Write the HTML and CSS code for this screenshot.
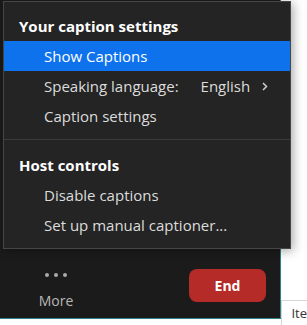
FILE: index.html
```html
<!DOCTYPE html>
<html>
<head>
<meta charset="utf-8">
<link rel="stylesheet" href="styles.css">
</head>
<body>
<div class="page">
  <div class="window">
    <div class="stage"></div>
    <div class="toolbar">
      <div class="more">
        <div class="dots"><span></span><span></span><span></span></div>
        <div class="more-label">More</div>
      </div>
      <button class="end">End</button>
    </div>
  </div>
  <div class="side">
    <div class="side-head">Ite</div>
  </div>
</div>
<div class="menu">
  <div class="section">
    <div class="heading">Your caption settings</div>
    <div class="item active">Show Captions</div>
    <div class="item sub"><span>Speaking language:</span><span class="value">English<svg class="chev" width="6" height="9" viewBox="0 0 6 9"><path d="M1 1 L4.5 4.5 L1 8" fill="none" stroke="#cfcfcf" stroke-width="1.5"/></svg></span></div>
    <div class="item">Caption settings</div>
  </div>
  <div class="section second">
    <div class="heading h2">Host controls</div>
    <div class="item">Disable captions</div>
    <div class="item">Set up manual captioner...</div>
  </div>
</div>
</body>
</html>
```
FILE: styles.css
```css
html, body {
  margin: 0;
  padding: 0;
  background: #ffffff;
  font-family: "Open Sans", "Noto Sans", sans-serif;
}
.page {
  display: flex;
  width: 307px;
  height: 325px;
}
.window {
  width: 282px;
  height: 318px;
  background: #1b1b1b;
  border-right: 1px solid #2f7f8c;
  border-bottom: 1px solid #2f7f8c;
  display: flex;
  flex-direction: column;
}
.stage {
  height: 248px;
}
.toolbar {
  flex: 1;
  display: flex;
  align-items: flex-start;
}
.more {
  width: 112px;
  display: flex;
  flex-direction: column;
  align-items: center;
  padding-top: 24px;
}
.dots {
  display: flex;
  gap: 5px;
  height: 6px;
  align-items: center;
}
.dots span {
  width: 4px;
  height: 4px;
  border-radius: 50%;
  background: #a9a9a9;
}
.more-label {
  margin-top: 14px;
  font-size: 14px;
  line-height: 18px;
  color: #b8b8b8;
}
.end {
  margin-left: 77px;
  margin-top: 21px;
  width: 77px;
  height: 33px;
  border: none;
  border-radius: 8px;
  background: #b52b28;
  color: #ffffff;
  font-family: "Open Sans", "Noto Sans", sans-serif;
  font-weight: 700;
  font-size: 14px;
  padding: 0;
}
.side {
  flex: 1;
  padding-top: 300px;
}
.side-head {
  border-top: 1px solid #d6d6d6;
  border-left: 1px solid #d6d6d6;
  height: 24px;
  padding-left: 9px;
  font-size: 13px;
  line-height: 24px;
  color: #333;
}
.menu {
  position: absolute;
  left: 3px;
  top: 1px;
  width: 286px;
  height: 246px;
  background: #242424;
  border: 1px solid #464646;
  box-shadow: 2px 2px 10px rgba(0, 0, 0, 0.35);
  color: #e2e2e2;
}
.section {
  padding-bottom: 8px;
}
.second {
  border-top: 1px solid #3c3c3c;
}
.heading {
  padding: 10px 0 0 15px;
  height: 29px;
  line-height: 29px;
  font-size: 15px;
  font-weight: 700;
  color: #ffffff;
}
.h2 {
  height: 30px;
  line-height: 30px;
}
.item {
  height: 30px;
  line-height: 30px;
  padding-left: 40px;
  font-size: 15px;
  color: #dcdcdc;
  display: flex;
}
.item.active {
  background: #0e72ed;
  color: #ffffff;
}
.sub .value {
  margin-left: 22px;
  display: flex;
  align-items: center;
}
.chev {
  margin-left: 12px;
}
```
